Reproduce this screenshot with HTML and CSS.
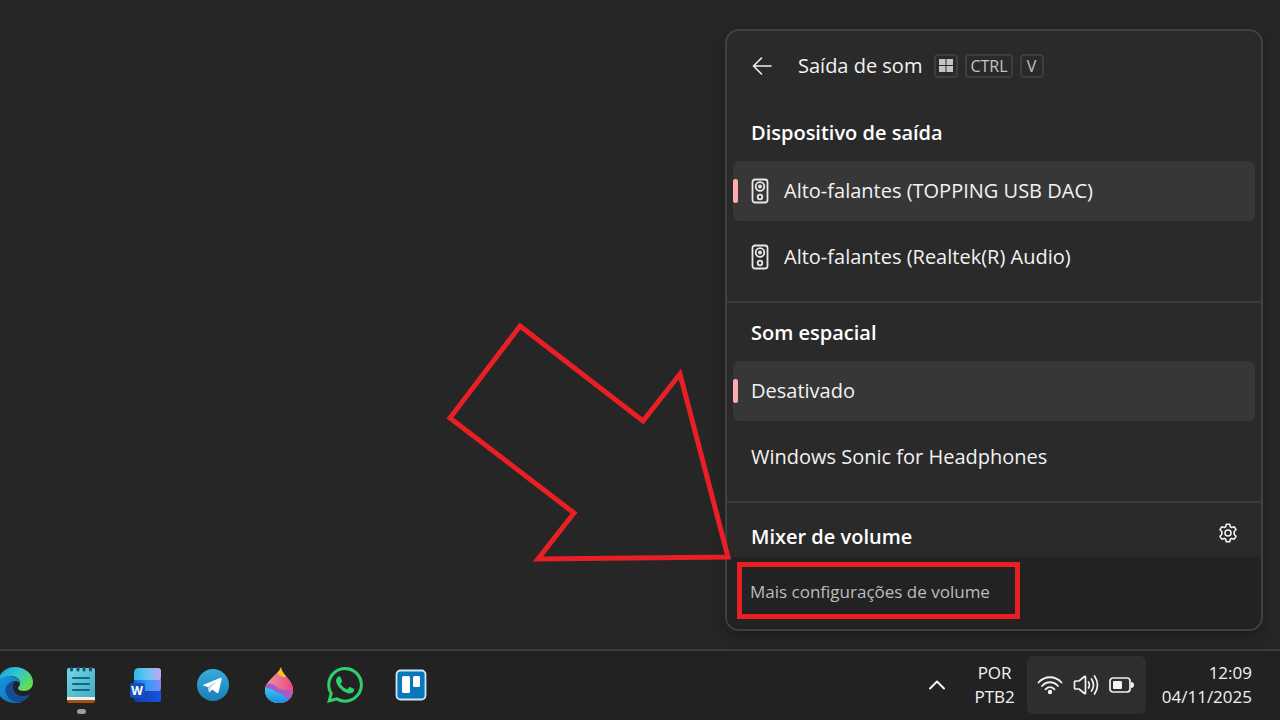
FILE: index.html
```html
<!DOCTYPE html>
<html lang="pt-BR">
<head>
<meta charset="utf-8">
<title>Saída de som</title>
<link rel="stylesheet" href="styles.css">
</head>
<body>
<main class="desktop">
  <section class="panel" aria-label="Saída de som">
    <header class="panel-header">
      <button class="icon-button back" aria-label="Voltar">
        <svg width="20" height="18" viewBox="0 0 20 18"><path d="M9.500 1 1.500 9l8 8M1.500 9H19" fill="none" stroke="currentColor" stroke-width="1.600" stroke-linecap="round" stroke-linejoin="round"/></svg>
      </button>
      <h1 class="panel-title">Saída de som</h1>
      <div class="keys">
        <kbd class="key"><svg width="14" height="13" viewBox="0 0 14 13" fill="currentColor"><path d="M0 0h6.500v6H0zM7.500 0H14v6H7.500zM0 7h6.500v6H0zM7.500 7H14v6H7.500z"/></svg></kbd>
        <kbd class="key">CTRL</kbd>
        <kbd class="key">V</kbd>
      </div>
    </header>
    <section class="group">
      <h2 class="group-title">Dispositivo de saída</h2>
      <div class="options">
        <button class="option selected">
          <svg class="speaker" width="18" height="26" viewBox="0 0 18 26" fill="none" stroke="currentColor" stroke-width="1.800"><rect x="1.500" y="1.500" width="15" height="23" rx="2.500"/><circle cx="9" cy="8.500" r="4.300"/><circle cx="9" cy="8.500" r="1.100"/><circle cx="9" cy="19" r="2.300"/></svg>
          <span class="option-text">Alto-falantes (TOPPING USB DAC)</span>
        </button>
        <button class="option">
          <svg class="speaker" width="18" height="26" viewBox="0 0 18 26" fill="none" stroke="currentColor" stroke-width="1.800"><rect x="1.500" y="1.500" width="15" height="23" rx="2.500"/><circle cx="9" cy="8.500" r="4.300"/><circle cx="9" cy="8.500" r="1.100"/><circle cx="9" cy="19" r="2.300"/></svg>
          <span class="option-text">Alto-falantes (Realtek(R) Audio)</span>
        </button>
      </div>
    </section>
    <section class="group">
      <h2 class="group-title">Som espacial</h2>
      <div class="options">
        <button class="option selected"><span class="option-text">Desativado</span></button>
        <button class="option"><span class="option-text">Windows Sonic for Headphones</span></button>
      </div>
    </section>
    <section class="mixer">
      <h2 class="group-title">Mixer de volume</h2>
      <button class="icon-button" aria-label="Configurações do mixer">
        <svg width="20" height="20" viewBox="0 0 20 20" fill="none" stroke="currentColor" stroke-width="1.600" stroke-linejoin="round"><path d="M8.300 1.200h3.400l.6 2.500 1.500.9 2.500-.8L18 6.700 16.200 8.500v3L18 13.300l-1.700 2.900-2.500-.8-1.500.9-.6 2.500H8.300l-.6-2.500-1.500-.9-2.500.8L2 13.300l1.800-1.800v-3L2 6.700l1.700-2.900 2.500.8 1.500-.9z"/><circle cx="10" cy="10" r="3"/></svg>
      </button>
    </section>
    <footer class="panel-footer">
      <button class="more">Mais configurações de volume</button>
    </footer>
    <svg class="arrow" width="290" height="246" viewBox="445 320 290 246"><path d="M520 326 643 421 680 374 728 557 538 559 574 513 450 418Z" fill="none" stroke="#e81f25" stroke-width="5"/></svg>
  </section>
</main>
<nav class="taskbar" aria-label="Barra de tarefas">
  <div class="apps">
    <button class="app" aria-label="Edge">
      <svg width="36" height="36" viewBox="0 0 36 36">
        <defs>
          <linearGradient id="edgeTop" x1="0" y1="0" x2="1" y2=".7"><stop offset="0" stop-color="#159bd8"/><stop offset=".5" stop-color="#35c5d0"/><stop offset="1" stop-color="#66de47"/></linearGradient>
          <linearGradient id="edgeBody" x1="0" y1="0" x2="1" y2="1"><stop offset="0" stop-color="#159be0"/><stop offset="1" stop-color="#1267b5"/></linearGradient>
        </defs>
        <path d="M1 15C2 6 9 0 18 0c10 0 18 7 18 15 0 6-4 9-9 9-4 0-6-1-6-3 0-1 2-2 2-5 0-4-4-7-9-7-6 0-10 3-13 6z" fill="url(#edgeTop)"/>
        <path d="M0 18C1 12 6 9 12 9c6 0 11 3 11 7-1-1-3-2-5-2-5 0-8 5-6 11 2 5 7 9 13 10-2 1-4 1-6 1C7 36-1 28 0 18z" fill="url(#edgeBody)"/>
        <path d="M18 14c-7 1-11 6-9 12 2 6 8 10 14 9 4-1 7-3 9-6 1-1 0-2-1-1-7 3-14-1-15-7 0-3 0-5 2-7z" fill="#124d91"/>
      </svg>
    </button>
    <button class="app active" aria-label="Bloco de notas">
      <svg width="30" height="38" viewBox="0 0 30 38">
        <defs><linearGradient id="note" x1="0" y1="0" x2="1" y2="1"><stop offset="0" stop-color="#75d6e6"/><stop offset="1" stop-color="#43abc4"/></linearGradient></defs>
        <rect x="1" y="27" width="28" height="10" rx="2" fill="#a4510d"/><path d="M1 29h28v5H1z" fill="#f2efec"/><path d="M3 2h24q2 0 2 2v27H1V4q0-2 2-2z" fill="url(#note)"/>
        <path d="M7 12h16M7 18h16M7 24h16" stroke="#12687e" stroke-width="2" stroke-linecap="round"/>
        <path d="M5.500 2v2M12 2v2M18 2v2M24.500 2v2" stroke="#14586c" stroke-width="3" stroke-linecap="round"/>
      </svg>
    </button>
    <button class="app" aria-label="Word">
      <svg width="34" height="36" viewBox="0 0 34 36">
        <defs>
          <linearGradient id="wordTop"><stop offset="0" stop-color="#28bde9"/><stop offset=".5" stop-color="#68c5f3"/><stop offset="1" stop-color="#c9a6f0"/></linearGradient>
          <linearGradient id="wordMid"><stop offset="0" stop-color="#1469df"/><stop offset=".5" stop-color="#3399f5"/><stop offset="1" stop-color="#7e8df5"/></linearGradient>
          <linearGradient id="wordLow"><stop offset="0" stop-color="#103bb0"/><stop offset="1" stop-color="#1556df"/></linearGradient>
        </defs>
        <path d="M4 23h27v9q0 3-3 3H7q-3 0-3-3z" fill="url(#wordLow)"/><path d="M4 12h27v9q0 3-3 3H4z" fill="url(#wordMid)"/><path d="M4 13V6q0-5 5-5h19q3 0 3 3v6q0 3-3 3z" fill="url(#wordTop)"/>
        <rect x="0" y="16" width="15" height="15" rx="3" fill="#1750bd"/><text class="word-letter" x="7" y="28" text-anchor="middle">W</text>
      </svg>
    </button>
    <button class="app" aria-label="Telegram">
      <svg width="32" height="32" viewBox="0 0 32 32">
        <defs><linearGradient id="tele" x1="0" y1="0" x2="0" y2="1"><stop offset="0" stop-color="#39abdc"/><stop offset="1" stop-color="#1780b8"/></linearGradient></defs>
        <circle cx="16" cy="16" r="16" fill="url(#tele)"/><path d="M6 16 23 9q2-.6 1.600 1.500l-3 12.500q-.5 1.800-2 .8l-4.400-3.200-2.400 2.300q-.8.700-1-.5l-1-4.400-4.500-1.500Q5.500 16.300 6 16z" fill="#fff"/><path d="m11 18 9.500-6.300-7.300 7.100-.7 4z" fill="#a6cce0"/>
      </svg>
    </button>
    <button class="app" aria-label="Paint 3D">
      <svg width="28" height="38" viewBox="0 0 28 38">
        <defs><clipPath id="drop"><path d="M16 1c1 8 12 13 12 23 0 8-6 13-14 13S0 32 0 24C0 15 13 9 16 1z"/></clipPath>
        <linearGradient id="pink"><stop offset="0" stop-color="#f398a0"/><stop offset="1" stop-color="#e94784"/></linearGradient>
        <linearGradient id="aqua" x1="0" x2="0" y1="0" y2="1"><stop offset="0" stop-color="#38c4f4"/><stop offset="1" stop-color="#148cdd"/></linearGradient></defs>
        <g clip-path="url(#drop)"><path d="M0 0h28v38H0z" fill="#fdc717"/><path d="M0 5h11c2 4 5 6 10 6h7v27H0z" fill="url(#pink)"/><path d="M0 18c8-2 11 3 15 5 5 2 8 0 13 4v11H0z" fill="#9c60c8"/><path d="M0 22c7 0 9 3 13 5 6 2 9 4 10 9v2H0z" fill="url(#aqua)"/></g>
      </svg>
    </button>
    <button class="app" aria-label="WhatsApp">
      <svg width="36" height="36" viewBox="0 0 24 24" fill="#2fd06b"><path d="M17.470 14.380c-.300-.150-1.760-.870-2.030-.970-.270-.100-.470-.150-.670.150-.200.300-.770.970-.940 1.160-.170.200-.350.220-.640.080-.300-.150-1.260-.460-2.390-1.480-.880-.790-1.480-1.760-1.650-2.060-.170-.300-.020-.460.130-.610.130-.130.300-.350.450-.520.150-.170.200-.300.300-.500.100-.200.050-.370-.030-.520-.070-.150-.670-1.610-.920-2.210-.240-.580-.490-.500-.670-.510h-.570c-.200 0-.520.070-.790.370-.270.300-1.040 1.020-1.040 2.480s1.070 2.880 1.210 3.070c.150.200 2.100 3.200 5.080 4.490.710.310 1.260.490 1.690.630.710.230 1.360.190 1.870.120.570-.090 1.760-.720 2.010-1.410.250-.690.250-1.290.170-1.410-.070-.120-.270-.200-.570-.350z"/><path fill-rule="evenodd" d="M20.500 3.480A11.820 11.820 0 0 0 12.050 0C5.500 0 .160 5.340.160 11.890c0 2.100.550 4.140 1.590 5.950L.060 24l6.300-1.650a11.880 11.880 0 0 0 5.690 1.450c6.550 0 11.890-5.340 11.890-11.900a11.800 11.800 0 0 0-3.440-8.420zM12.050 21.790a9.870 9.870 0 0 1-5.030-1.380l-.360-.210-3.740.980 1-3.650-.240-.370a9.860 9.860 0 1 1 8.370 4.630z"/></svg>
    </button>
    <button class="app" aria-label="Trello">
      <svg width="32" height="32" viewBox="0 0 32 32"><rect x="1.500" y="1.500" width="29" height="29" rx="4" fill="#0878bd" stroke="#d3e6f0" stroke-width="1.800"/><rect x="7" y="7" width="8" height="17" rx="1.500" fill="#fff"/><rect x="18" y="7" width="7" height="11" rx="1.500" fill="#fff"/></svg>
    </button>
  </div>
  <div class="tray">
    <button class="icon-button overflow" aria-label="Mostrar ícones ocultos"><svg width="18" height="10" viewBox="0 0 18 10"><path d="m2 8.500 7-7 7 7" fill="none" stroke="currentColor" stroke-width="2" stroke-linecap="round" stroke-linejoin="round"/></svg></button>
    <button class="language">POR<br>PTB2</button>
    <button class="status" aria-label="Rede, som e bateria">
      <svg width="26" height="20" viewBox="0 0 26 20" fill="none" stroke="currentColor" stroke-width="1.800" stroke-linecap="round"><path d="M1.500 7.500c6.500-7 16.500-7 23 0M5 11c4.500-5 11.500-5 16 0M8.500 14.300c2.700-2.800 6.300-2.800 9 0"/><circle cx="13" cy="17" r="2.200" fill="currentColor" stroke="none"/></svg>
      <svg width="26" height="22" viewBox="0 0 26 22" fill="none" stroke="currentColor" stroke-width="1.700" stroke-linecap="round" stroke-linejoin="round"><path d="M1.500 8v6q0 1 1 1H6l5.500 4.500q1 .5 1-.7V3.200q0-1.200-1-.7L6 7H2.500q-1 0-1 1z"/><path d="M15.500 8q1.800 3 0 6M18.500 5q4 6 0 12M21.500 2q6 9 0 18"/></svg>
      <svg width="26" height="16" viewBox="0 0 26 16"><rect x="1" y="1" width="20" height="14" rx="3" fill="none" stroke="currentColor" stroke-width="1.700"/><rect x="4" y="4" width="9" height="8" rx="1" fill="currentColor"/><path d="M22 5q3 0 3 3t-3 3z" fill="currentColor"/></svg>
    </button>
    <button class="clock"><time datetime="2025-11-04T12:09">12:09<br>04/11/2025</time></button>
  </div>
</nav>
</body>
</html>
```
FILE: styles.css
```css
* { box-sizing: border-box; }

body {
  margin: 0;
  min-height: 100vh;
  display: flex;
  flex-direction: column;
  overflow: hidden;
  background: #262626;
  color: #f2f2f2;
  font-family: "Open Sans", "Noto Sans", sans-serif;
  font-size: 20px;
}

button {
  margin: 0;
  padding: 0;
  border: 0;
  background: none;
  color: inherit;
  font: inherit;
}

svg { display: block; flex: none; }

h1, h2 { margin: 0; font-size: 20px; }

.desktop {
  flex: 1;
  display: flex;
  justify-content: flex-end;
  align-items: flex-end;
  padding: 18px 17px;
}

.panel {
  position: relative;
  flex: 0 1 538px;
  border: 2px solid #404040;
  border-radius: 14px;
  background: #2a2a2a;
  box-shadow: 0 6px 14px rgba(0, 0, 0, 0.25);
}

.panel-header {
  display: flex;
  align-items: center;
  height: 72px;
  padding: 0 23px 3px;
}

.icon-button { display: grid; place-items: center; }

.back { padding: 4px 2px; }

.panel-title { margin-left: 24px; font-weight: 400; }

.keys { display: flex; gap: 7px; margin-left: 12px; }

.key {
  display: grid;
  place-items: center;
  min-width: 24px;
  height: 24px;
  padding: 0 3px;
  border: 2px solid #3e3e3e;
  border-radius: 4px;
  color: #c4c4c4;
  font-family: inherit;
  font-size: 16px;
  line-height: 20px;
}

.group {
  padding: 2px 6px 14px;
  border-bottom: 2px solid #3b3b3b;
}

.group-title {
  padding: 0 18px;
  color: #ffffff;
  line-height: 56px;
  font-weight: 600;
}

.options { display: flex; flex-direction: column; gap: 6px; }

.option {
  display: flex;
  align-items: center;
  gap: 15px;
  height: 60px;
  padding: 0 18px;
  border-radius: 6px;
  text-align: left;
}

.option-text { padding-bottom: 2px; }

.speaker { color: #e8e8e8; }

.selected { position: relative; background: #373737; }

.selected::before {
  content: "";
  position: absolute;
  left: 0;
  top: 18px;
  width: 5px;
  height: 24px;
  border-radius: 3px;
  background: #ffadb0;
}

.mixer {
  display: flex;
  align-items: flex-end;
  justify-content: space-between;
  height: 54px;
  padding: 0 23px 0 6px;
}

.mixer .group-title { line-height: 40px; }
.mixer .icon-button { padding-bottom: 14px; }

.panel-footer {
  padding: 5px 10px 10px;
  border-radius: 0 0 12px 12px;
  background: #222222;
}

.more {
  height: 57px;
  padding: 2px 25px 0 8px;
  border: 5px solid #e81f25;
  color: #bdbdbd;
  font-size: 17px;
}

.arrow { position: absolute; left: -282px; top: 289px; pointer-events: none; }

.taskbar {
  display: flex;
  justify-content: space-between;
  height: 71px;
  border-top: 2px solid #3b3b3b;
  background: #222222;
}

.apps { display: flex; margin-left: -18px; padding-bottom: 2px; }

.app {
  position: relative;
  display: grid;
  place-items: center;
  width: 66px;
}

.active::after {
  content: "";
  position: absolute;
  left: 29px;
  bottom: 4px;
  width: 9px;
  height: 5px;
  border-radius: 3px;
  background: #9c9c9c;
}

.word-letter { fill: #fff; font-size: 12px; font-weight: 700; }

.tray {
  display: flex;
  align-items: center;
  padding: 0 28px 2px 0;
  font-size: 17px;
  line-height: 24px;
}

.overflow { margin-right: 28px; }

.language { margin-right: 12px; text-align: center; }

.status {
  display: flex;
  align-items: center;
  justify-content: center;
  gap: 10px;
  width: 119px;
  height: 58px;
  margin-right: 16px;
  border-radius: 6px;
  background: #2e2e2e;
}

.clock { text-align: right; }
```
